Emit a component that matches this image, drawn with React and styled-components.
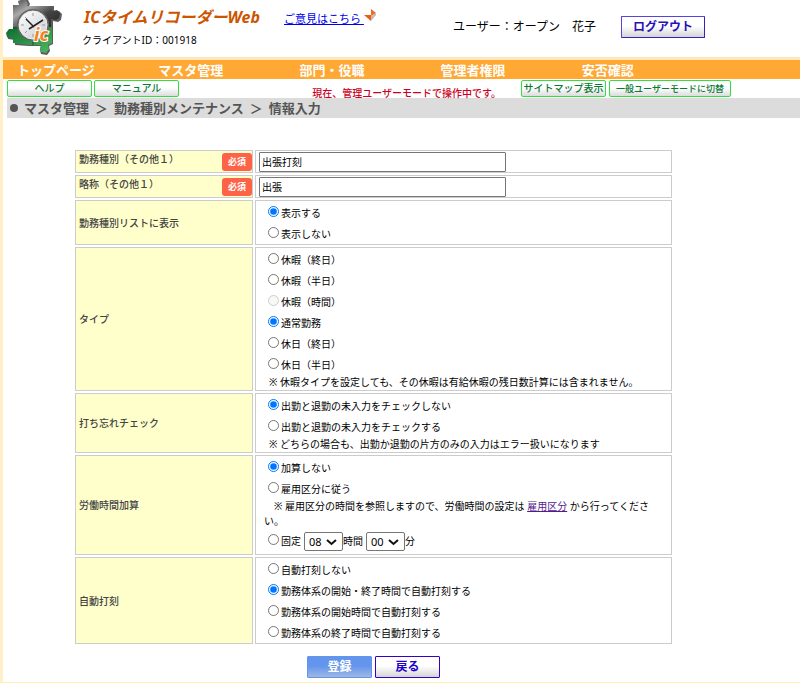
import React from 'react';
import styled, { createGlobalStyle } from 'styled-components';

const GlobalStyle = createGlobalStyle`
    body {
        margin: 0;
        background: #fff;
        color: #000;
        font-family: "Noto Sans", "Noto Sans CJK JP", sans-serif;
        font-size: 10px;
    }
    button, input, select {
        font-family: inherit;
    }
`;

// #ffa834 nav orange
// #fff0c8 page frame

const Page = styled.div`
    border-left: 3px solid #fff0c8;
    border-bottom: 1px solid #ffefb0;
    padding-bottom: 4px;
`;

const Header = styled.header`
    display: flex;
    height: 57px;
    padding: 0 95px 0 3px;
    border-bottom: 3px solid #ffe6bc;
`;

const LogoBox = styled.div`
    width: 75px;
    flex-shrink: 0;
`;

const Brand = styled.div`
    width: 203px;
    flex-shrink: 0;
    padding-top: 5px;
    box-sizing: border-box;
    white-space: nowrap;
`;

const Title = styled.h1`
    margin: 0;
    padding-left: 3px;
    color: #cc5500;
    font-size: 16px;
    font-style: italic;
    font-weight: bold;
    line-height: 24px;
`;

const ClientId = styled.div`
    padding-left: 1px;
    line-height: 22px;
`;

const Feedback = styled.div`
    display: flex;
    flex: 1;
    padding-top: 9px;
    font-size: 11px;
    line-height: 20px;
    white-space: nowrap;
`;

const Link = styled.a`
    color: ${props => props.$visited ? '#551a8b' : '#0000ee'};
    text-decoration: underline;
    white-space: pre;
`;

const User = styled.div`
    padding: 15px 25px 0 0;
    font-size: 12px;
    line-height: 24px;
    white-space: nowrap;
`;

const Button = styled.button`
    height: 22px;
    padding: 0;
    border: 1px solid #3311cc;
    border-radius: 1px;
    background: linear-gradient(#fff 45%, #d4d4d4);
    color: #2a10b8;
    font-size: 12px;
    font-weight: bold;
    line-height: 20px;
    cursor: pointer;
`;

const LogoutButton = styled(Button)`
    width: 84px;
    margin-top: 16px;
    border-color: #5544dd #3322bb #3322bb #5544dd;
`;

const Nav = styled.nav`
    display: grid;
    grid-template-columns: repeat(5, 1fr);
    padding: 0 77px 0 14px;
    background: #ffa834;
`;

const NavLink = styled.a`
    height: 19px;
    box-sizing: border-box;
    padding-top: 1px;
    color: #fff;
    font-size: 13px;
    font-weight: bold;
    line-height: 19px;
    text-decoration: none;
    white-space: nowrap;
`;

const ToolBar = styled.div`
    display: flex;
    padding: 1px 69px 1px 4px;
`;

const ToolGroup = styled.div`
    display: flex;
    gap: ${props => props.$gap}px;
`;

const ToolButton = styled.button`
    width: ${props => props.$wide ? 122 : 85}px;
    height: 17px;
    padding: 0;
    border: 1px solid #33dd44;
    border-radius: 2px;
    background: linear-gradient(#fff 45%, #dcdcdc);
    color: #087a34;
    font-size: ${props => props.$wide ? 9 : 10}px;
    font-weight: 500;
    line-height: 15px;
    white-space: nowrap;
    cursor: pointer;
`;

const ModeMessage = styled.div`
    flex: 1;
    height: 12px;
    padding: 5px 20px 0 0;
    color: #cc0022;
    font-weight: 500;
    line-height: 16px;
    text-align: right;
    white-space: nowrap;
`;

const Breadcrumb = styled.div`
    display: flex;
    align-items: center;
    gap: 6px;
    height: 20px;
    margin-left: 4px;
    padding-left: 3px;
    background: #dcdcdc;
    color: #555;
    font-size: 13px;
    font-weight: bold;
    line-height: 18px;
`;

const Dot = styled.span`
    width: 8px;
    height: 8px;
    border-radius: 50%;
    background: #555;
`;

const Form = styled.form`
    padding: 30px 126px 0 70px;
`;

const Table = styled.table`
    width: 100%;
    border-spacing: 2px;
    table-layout: fixed;
`;

const HeadCell = styled.th`
    width: 178px;
    box-sizing: border-box;
    padding: 0 0 0 3px;
    border: 1px solid #ccc;
    background: #ffffcc;
    color: #444;
    font-weight: 500;
    line-height: 16px;
    text-align: left;
`;

const HeadRow = styled.div`
    display: flex;
    justify-content: space-between;
    height: 21px;
`;

const Required = styled.span`
    width: 30px;
    height: 18px;
    margin-top: 2px;
    border-radius: 3px;
    background: #ff6347;
    color: #fff;
    font-size: 9px;
    font-weight: bold;
    line-height: 18px;
    text-align: center;
`;

const Cell = styled.td`
    padding: ${props => props.$text ? '0 3px' : '1px 13px 0 8px'};
    border: 1px solid #ccc;
    line-height: 15px;
`;

const TextBox = styled.input`
    display: block;
    width: 247px;
    height: 20px;
    box-sizing: border-box;
    padding: 0 2px;
    border: 1px solid #767676;
    border-radius: 1px;
    font-size: 10px;
`;

const Choice = styled.div`
    height: 21px;
    box-sizing: border-box;
    padding-top: 2px;
    line-height: 19px;
    white-space: nowrap;
`;

const Radio = styled.input`
    width: 11px;
    height: 11px;
    margin: 0 2px 0 4px;
    vertical-align: 0;
`;

const Note = styled.div`
    padding-left: ${props => props.$indent ? 5 : 0}px;
`;

const FixedTime = styled.div`
    display: flex;
    align-items: center;
    height: 25px;
`;

const SelectBox = styled.span`
    position: relative;
    display: flex;
    margin-left: 3px;

    svg {
        position: absolute;
        top: 6px;
        right: 6px;
        pointer-events: none;
    }
`;

const Select = styled.select`
    width: 39px;
    height: 19px;
    padding: 0 0 0 4px;
    border: 1px solid #767676;
    border-radius: 2px;
    background: #fff;
    color: #000;
    font-size: 11px;
    appearance: none;
`;

const Actions = styled.div`
    display: flex;
    justify-content: center;
    gap: 3px;
    padding-top: 10px;
`;

const ActionButton = styled(Button)`
    width: 65px;
    border-color: #3300cc;
    color: #2200cc;
`;

const SubmitButton = styled(ActionButton)`
    border-color: #6495ed;
    background: linear-gradient(#6495ed 45%, #9fb8e2);
    color: #fff;
`;

const Logo = () => (
    <svg width="60" height="56" viewBox="0 0 60 56" aria-label="IC">
        <defs>
            <linearGradient id="metal" x1="0" y1="0" x2="1" y2="1">
                <stop offset="0" stopColor="#444" />
                <stop offset="0.3" stopColor="#aaa" />
                <stop offset="0.6" stopColor="#444" />
                <stop offset="1" stopColor="#222" />
            </linearGradient>
            <linearGradient id="leaf" x1="0" y1="0" x2="1" y2="1">
                <stop offset="0" stopColor="#0c6b2b" />
                <stop offset="1" stopColor="#4dbb65" />
            </linearGradient>
            <linearGradient id="face" x1="0" y1="0" x2="1" y2="1">
                <stop offset="0" stopColor="#fff" />
                <stop offset="1" stopColor="#c8ccd2" />
            </linearGradient>
        </defs>
        <path d="M8 6h6l-1-4 3-2h6l2 4-1 2h25v6l5-1 3 3-1 6-3 2-5-1v23l-4 2 1 5-3 4-6-1-1-4 1-4H23l-14-1V40l-7-1-1-4 2-5 6-1z" fill="#333" opacity="0.8" />
        <path d="M7 5h6l-1-4 3-1h5l2 4-1 2h25v5l5-1 3 3-1 5-3 2-5-1v9H7z" fill="url(#metal)" />
        <path d="M7 27h39v16l-4 2 1 4-3 4-5-1-1-4 1-3H23L7 43v-5l-6-1-1-4 3-4 4 0z" fill="url(#leaf)" />
        <path d="M27 38v7M7 28h6" stroke="#0a5522" />
        <circle cx="27" cy="25" r="16" fill="#666" />
        <circle cx="27" cy="25" r="14" fill="url(#face)" stroke="#eee" />
        <path d="M27 13v3M27 34v3M15 25h3M36 25h3M19 17l2 2M33 31l2 2M19 33l2-2" stroke="#999" />
        <path d="M20 19l8 8M23 29l14-9" stroke="#222" strokeWidth="1.5" />
        <text x="28" y="41" fill="#f58220" stroke="#fff" strokeWidth="2" paintOrder="stroke" fontSize="18" fontStyle="italic" fontWeight="bold">ic</text>
    </svg>
);

const ArrowIcon = () => (
    <svg width="14" height="14" viewBox="0 0 14 14" aria-hidden="true">
        <path d="M7 0l5 4-5 3z" fill="#f26a1b" />
        <path d="M12 4v2l-5 6V7z" fill="#bbb" />
        <path d="M0 6h7v6z" fill="#f05a10" />
    </svg>
);

const TimeSelect = ({ label, value, options }) => (
    <SelectBox>
        <Select aria-label={label} defaultValue={value}>
            {options.map(option => <option key={option}>{option}</option>)}
        </Select>
        <svg width="11" height="8" viewBox="0 0 11 8" aria-hidden="true">
            <path d="M1 2l4.5 4L10 2" fill="none" stroke="#111" strokeWidth="2" />
        </svg>
    </SelectBox>
);

const RadioLine = ({ name, label, checked, disabled }) => (
    <Choice>
        <label>
            <Radio type="radio" name={name} defaultChecked={checked} disabled={disabled} />
            {label}
        </label>
    </Choice>
);

const TextRow = ({ id, label, value }) => (
    <tr>
        <HeadCell scope="row">
            <HeadRow>
                <label htmlFor={id}>{label}</label>
                <Required>必須</Required>
            </HeadRow>
        </HeadCell>
        <Cell $text>
            <TextBox id={id} type="text" defaultValue={value} />
        </Cell>
    </tr>
);

const RadioRow = ({ name, title, options, selected, disabled, children }) => (
    <tr>
        <HeadCell scope="row">{title}</HeadCell>
        <Cell>
            {options.map(option => (
                <RadioLine
                    key={option}
                    name={name}
                    label={option}
                    checked={option === selected}
                    disabled={option === disabled}
                />
            ))}
            {children}
        </Cell>
    </tr>
);

const menu = ['トップページ', 'マスタ管理', '部門・役職', '管理者権限', '安否確認'];

const types = [
    '休暇（終日）',
    '休暇（半日）',
    '休暇（時間）',
    '通常勤務',
    '休日（終日）',
    '休日（半日）',
];

const App = () => {
    return (
        <Page>
            <GlobalStyle />
            <Header>
                <LogoBox><Logo /></LogoBox>
                <Brand>
                    <Title>ICタイムリコーダーWeb</Title>
                    <ClientId>クライアントID：001918</ClientId>
                </Brand>
                <Feedback>
                    <Link href="#">{'ご意見はこちら '}</Link>
                    <ArrowIcon />
                </Feedback>
                <User>ユーザー：オープン　花子</User>
                <LogoutButton type="button">ログアウト</LogoutButton>
            </Header>
            <Nav>
                {menu.map(item => <NavLink key={item} href="#">{item}</NavLink>)}
            </Nav>
            <ToolBar>
                <ToolGroup $gap={2}>
                    <ToolButton type="button">ヘルプ</ToolButton>
                    <ToolButton type="button">マニュアル</ToolButton>
                </ToolGroup>
                <ModeMessage>現在、管理ユーザーモードで操作中です。</ModeMessage>
                <ToolGroup $gap={3}>
                    <ToolButton type="button">サイトマップ表示</ToolButton>
                    <ToolButton type="button" $wide>一般ユーザーモードに切替</ToolButton>
                </ToolGroup>
            </ToolBar>
            <Breadcrumb>
                <Dot />
                <span>マスタ管理</span>
                <span>＞</span>
                <span>勤務種別メンテナンス</span>
                <span>＞</span>
                <span>情報入力</span>
            </Breadcrumb>

            <Form onSubmit={e => e.preventDefault()}>
                <Table>
                    <tbody>
                        <TextRow id="name" label="勤務種別（その他１）" value="出張打刻" />
                        <TextRow id="short" label="略称（その他１）" value="出張" />
                        <RadioRow
                            name="list"
                            title="勤務種別リストに表示"
                            options={['表示する', '表示しない']}
                            selected="表示する"
                        />
                        <RadioRow
                            name="type"
                            title="タイプ"
                            options={types}
                            selected="通常勤務"
                            disabled="休暇（時間）"
                        >
                            <Note $indent>※ 休暇タイプを設定しても、その休暇は有給休暇の残日数計算には含まれません。</Note>
                        </RadioRow>
                        <RadioRow
                            name="check"
                            title="打ち忘れチェック"
                            options={['出勤と退勤の未入力をチェックしない', '出勤と退勤の未入力をチェックする']}
                            selected="出勤と退勤の未入力をチェックしない"
                        >
                            <Note $indent>※ どちらの場合も、出勤か退勤の片方のみの入力はエラー扱いになります</Note>
                        </RadioRow>
                        <RadioRow
                            name="add"
                            title="労働時間加算"
                            options={['加算しない', '雇用区分に従う']}
                            selected="加算しない"
                        >
                            <Note>
                                {'　※ 雇用区分の時間を参照しますので、労働時間の設定は '}
                                <Link href="#" $visited>雇用区分</Link>
                                {' から行ってください。'}
                            </Note>
                            <FixedTime>
                                <label><Radio type="radio" name="add" />固定</label>
                                <TimeSelect label="時間" value="08" options={['00', '08']} />
                                時間
                                <TimeSelect label="分" value="00" options={['00', '30']} />
                                分
                            </FixedTime>
                        </RadioRow>
                        <RadioRow
                            name="auto"
                            title="自動打刻"
                            options={[
                                '自動打刻しない',
                                '勤務体系の開始・終了時間で自動打刻する',
                                '勤務体系の開始時間で自動打刻する',
                                '勤務体系の終了時間で自動打刻する',
                            ]}
                            selected="勤務体系の開始・終了時間で自動打刻する"
                        />
                    </tbody>
                </Table>
                <Actions>
                    <SubmitButton type="submit">登録</SubmitButton>
                    <ActionButton type="button">戻る</ActionButton>
                </Actions>
            </Form>
        </Page>
    );
};

export default App;
